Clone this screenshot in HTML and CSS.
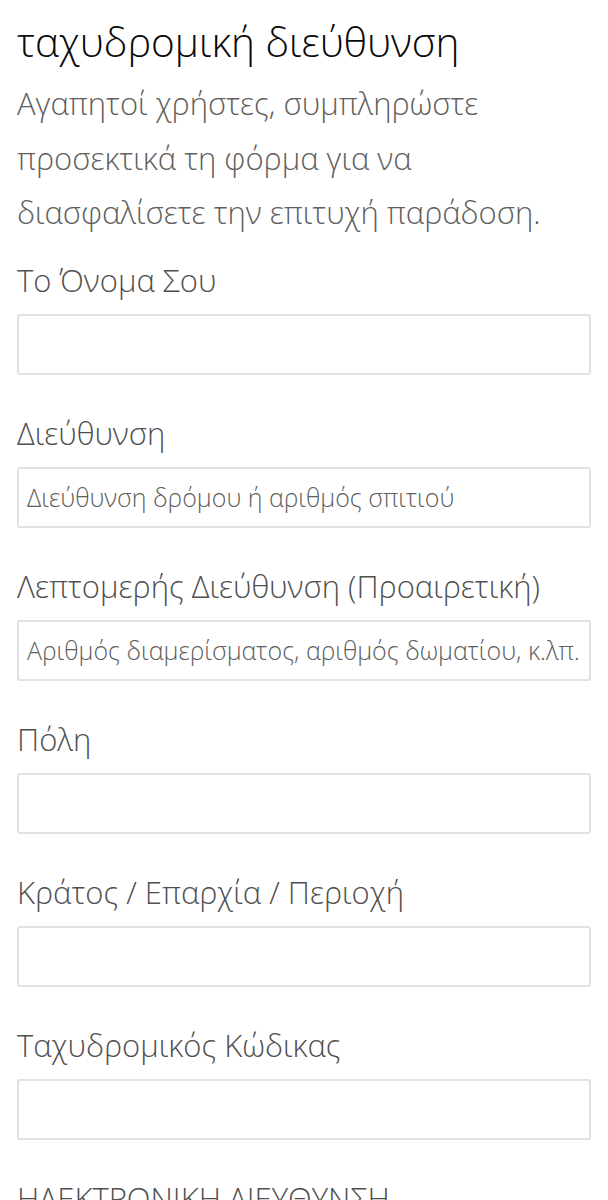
FILE: index.html
```html
<!DOCTYPE html>
<html lang="el">
<head>
<meta charset="utf-8">
<link rel="stylesheet" href="styles.css">
</head>
<body>
<main class="page">
  <h1 class="title">ταχυδρομική διεύθυνση</h1>
  <p class="intro">Αγαπητοί χρήστες, συμπληρώστε προσεκτικά τη φόρμα για να διασφαλίσετε την επιτυχή παράδοση.</p>
  <form class="form">
    <div class="field">
      <label class="label">Το Όνομα Σου</label>
      <input class="input" type="text">
    </div>
    <div class="field">
      <label class="label">Διεύθυνση</label>
      <input class="input" type="text" placeholder="Διεύθυνση δρόμου ή αριθμός σπιτιού">
    </div>
    <div class="field">
      <label class="label">Λεπτομερής Διεύθυνση (Προαιρετική)</label>
      <input class="input" type="text" placeholder="Αριθμός διαμερίσματος, αριθμός δωματίου, κ.λπ.">
    </div>
    <div class="field">
      <label class="label">Πόλη</label>
      <input class="input" type="text">
    </div>
    <div class="field">
      <label class="label">Κράτος / Επαρχία / Περιοχή</label>
      <input class="input" type="text">
    </div>
    <div class="field">
      <label class="label">Ταχυδρομικός Κώδικας</label>
      <input class="input" type="text">
    </div>
    <div class="field">
      <label class="label">ΗΛΕΚΤΡΟΝΙΚΗ ΔΙΕΥΘΥΝΣΗ</label>
      <input class="input" type="email">
    </div>
  </form>
</main>
</body>
</html>
```

FILE: styles.css
```css
html, body {
  margin: 0;
  padding: 0;
  background: #fff;
}
body {
  font-family: "Open Sans", "Noto Sans", sans-serif;
}
.page {
  padding: 17px 17px 0;
}
.title {
  margin: 0;
  font-size: 40.5px;
  line-height: 50px;
  font-weight: 300;
  color: #0a0a0a;
}
.intro {
  margin: 9px 0 0;
  font-size: 31px;
  line-height: 54.5px;
  font-weight: 300;
  color: #606060;
}
.form {
  display: flex;
  flex-direction: column;
  gap: 38px;
  margin-top: 20px;
}
.field {
  display: flex;
  flex-direction: column;
  gap: 14px;
}
.label {
  font-size: 31px;
  line-height: 40px;
  font-weight: 300;
  color: #505050;
}
.input {
  box-sizing: border-box;
  width: 100%;
  height: 61px;
  margin: 0;
  padding: 0 8px;
  border: 2px solid #e2e2e2;
  border-radius: 3px;
  background: #fff;
  font-family: "Open Sans", "Noto Sans", sans-serif;
  font-size: 25px;
  font-weight: 300;
  color: #333;
  outline: none;
}
.input::placeholder {
  color: #606060;
  opacity: 1;
}
```
